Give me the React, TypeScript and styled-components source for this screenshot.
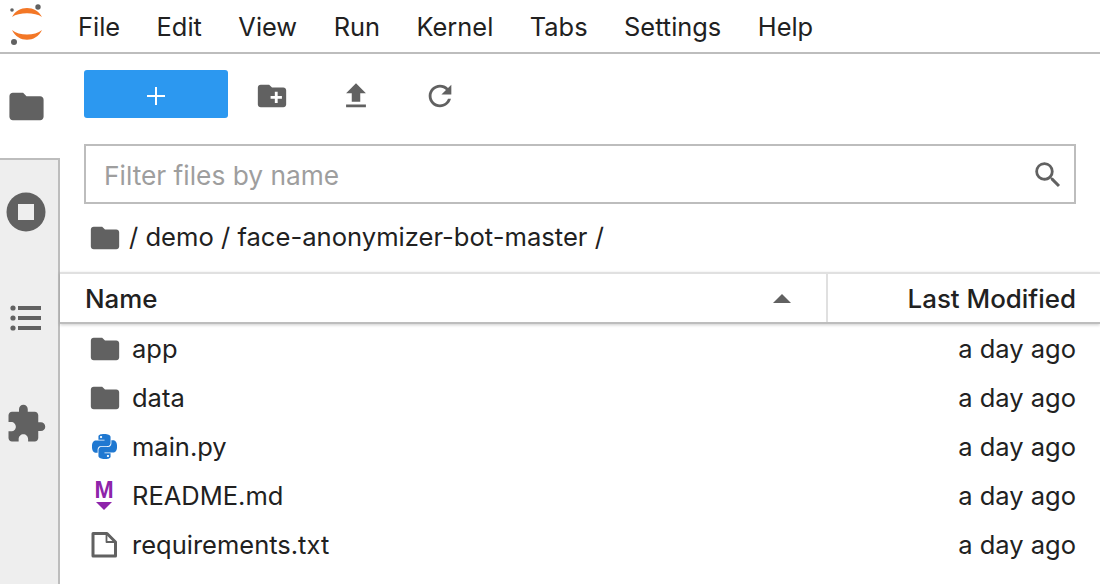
import { FC } from "react";
import styled, { createGlobalStyle } from "styled-components";
import { MdCreateNewFolder, MdExtension, MdFileUpload, MdFolder, MdRefresh, MdSearch } from "react-icons/md";
import { SiPython } from "react-icons/si";

const GlobalStyle = createGlobalStyle`
  html, body {
    margin: 0;
    height: 100%;
    overflow: hidden;
    background: #fff;
    font-family: Inter, "Liberation Sans", Arial, sans-serif;
    color: #212121;
  }
  #root { height: 100%; }
`

const Page = styled.div`
  width: 1100px;
  height: 584px;
  display: flex;
  flex-direction: column;
`
const MenuBar = styled.div`
  height: 52px;
  display: flex;
  align-items: center;
  border-bottom: 2px solid #bdbdbd;
  flex-shrink: 0;
`
const LogoBox = styled.div`
  width: 78px;
  height: 52px;
  display: flex;
`
const MenuList = styled.div`
  display: flex;
  gap: 36.5px;
  font-size: 25.4px;
  color: #212121;
`
const Body = styled.div`
  flex: 1;
  display: flex;
  min-height: 0;
`
const Sidebar = styled.div`
  width: 58px;
  flex-shrink: 0;
  background: #eeeeee;
  border-right: 2px solid #bdbdbd;
  display: flex;
  flex-direction: column;
`
const Tab = styled.div<{ $active?: boolean }>`
  height: 104px;
  flex-shrink: 0;
  box-sizing: content-box;
  display: flex;
  align-items: center;
  justify-content: center;
  color: #616161;
  background: ${p => (p.$active ? "#fff" : "transparent")};
  margin-right: ${p => (p.$active ? "-2px" : "0")};
  padding-right: ${p => (p.$active ? "8px" : "6px")};
  border-bottom: 2px solid ${p => (p.$active ? "#bdbdbd" : "transparent")};
`
const Main = styled.div`
  flex: 1;
  min-width: 0;
  display: flex;
  flex-direction: column;
`
const Toolbar = styled.div`
  display: flex;
  align-items: center;
  margin: 16px 0 26px 24px;
  height: 48px;
`
const NewButton = styled.div`
  width: 144px;
  height: 48px;
  border-radius: 3px;
  background: #2c98f0;
  display: flex;
  align-items: center;
  justify-content: center;
  margin-right: 2px;
  padding-top: 4px;
  box-sizing: border-box;
`
const ToolIcon = styled.div`
  width: 84px;
  display: flex;
  align-items: center;
  justify-content: center;
  color: #616161;
  padding-top: 4px;
`
const Filter = styled.div`
  margin: 0 24px;
  height: 60px;
  box-sizing: border-box;
  border: 2px solid #bdbdbd;
  display: flex;
  align-items: center;
  justify-content: space-between;
  padding: 2px 9px 0 18px;
  font-size: 26.3px;
  color: #9e9e9e;
`
const Crumbs = styled.div`
  height: 68px;
  display: flex;
  align-items: center;
  padding-left: 28px;
  font-size: 25.6px;
  gap: 7px;
`
const CrumbPath = styled.span`
  padding-bottom: 3px;
`
const Header = styled.div`
  height: 47px;
  padding-top: 1px;
  display: flex;
  border-top: 2px solid #e0e0e0;
  border-bottom: 2px solid #bdbdbd;
  box-shadow: 0 1px 3px rgba(0, 0, 0, 0.2);
  font-size: 25.9px;
  font-weight: 500;
`
const NameHead = styled.div`
  flex: 1;
  display: flex;
  align-items: center;
  justify-content: space-between;
  padding: 0 35px 0 25px;
`
const DateHead = styled.div`
  width: 274px;
  margin-top: -1px;
  box-sizing: border-box;
  border-left: 2px solid #e0e0e0;
  display: flex;
  align-items: center;
  justify-content: flex-end;
  padding: 1px 24px 0 0;
`
const SortCaret = styled.div`
  width: 0;
  height: 0;
  border-left: 9px solid transparent;
  border-right: 9px solid transparent;
  border-bottom: 9px solid #616161;
`
const Row = styled.div`
  height: 49px;
  display: flex;
  align-items: center;
  font-size: 25.5px;
  padding: 0 24px 0 28px;
`
const RowIcon = styled.div`
  width: 44px;
  display: flex;
  align-items: center;
  color: #616161;
`
const RowName = styled.div`
  flex: 1;
`

const JupyterLogo = () => (
  <svg width="46" height="46" viewBox="0 0 46 46" style={{ display: "block", margin: "1px 0 0 4px" }}>
    <path d="M8 16 C14 4 32 4 38 16 C31 11 15 11 8 16Z" fill="#f37726" />
    <path d="M8 29 C14 42 32 42 38 29 C31 35 15 35 8 29Z" fill="#f37726" />
    <circle cx="34" cy="6" r="2.7" fill="#616161" />
    <circle cx="8" cy="9" r="1.8" fill="#616161" />
    <circle cx="10" cy="41" r="3" fill="#616161" />
  </svg>
)

const StopIcon = () => (
  <svg width="40" height="40" viewBox="0 0 40 40">
    <circle cx="20" cy="20" r="19.5" fill="#616161" />
    <rect x="12" y="12" width="16" height="16" fill="#eeeeee" />
  </svg>
)

const ListIcon = () => (
  <svg width="34" height="28" viewBox="0 0 34 28">
    <g fill="#616161">
      <circle cx="4" cy="4" r="2.6" />
      <circle cx="4" cy="14" r="2.6" />
      <circle cx="4" cy="24" r="2.6" />
      <rect x="9" y="2" width="23" height="4" />
      <rect x="9" y="12" width="23" height="4" />
      <rect x="9" y="22" width="23" height="4" />
    </g>
  </svg>
)

const PlusIcon = () => (
  <svg width="20" height="20" viewBox="0 0 20 20">
    <path d="M10 1v18M1 10h18" stroke="#fff" strokeWidth="2" />
  </svg>
)

const MarkdownIcon = () => (
  <svg width="32" height="42" viewBox="0 0 32 42">
    <text x="16" y="23" textAnchor="middle" fontFamily="Liberation Sans" fontWeight="700" fontSize="23" fill="#8e24aa">M</text>
    <polygon points="8,27 24,27 16,35" fill="#8e24aa" />
  </svg>
)

const FileIcon = () => (
  <svg width="30" height="30" viewBox="0 0 30 30" fill="none" stroke="#616161" strokeWidth="3" strokeLinejoin="round">
    <path d="M5 3.5H19L27.5 12V26H5Z" />
    <path d="M18.5 3.5V12H27.5" strokeWidth="1.8" />
  </svg>
)

const files: { name: string; icon: JSX.Element }[] = [
  { name: "app", icon: <MdFolder size={34} /> },
  { name: "data", icon: <MdFolder size={34} /> },
  { name: "main.py", icon: <SiPython size={25} color="#1f78d1" style={{ marginLeft: 4 }} /> },
  { name: "README.md", icon: <MarkdownIcon /> },
  { name: "requirements.txt", icon: <FileIcon /> },
]

const menus = ["File", "Edit", "View", "Run", "Kernel", "Tabs", "Settings", "Help"]

const App: FC = () => {
  return (
    <Page>
      <GlobalStyle />
      <MenuBar>
        <LogoBox>
          <JupyterLogo />
        </LogoBox>
        <MenuList>
          {menus.map(m => (
            <span key={m}>{m}</span>
          ))}
        </MenuList>
      </MenuBar>
      <Body>
        <Sidebar>
          <Tab $active>
            <MdFolder size={41} />
          </Tab>
          <Tab>
            <StopIcon />
          </Tab>
          <Tab>
            <ListIcon />
          </Tab>
          <Tab>
            <MdExtension size={42} />
          </Tab>
        </Sidebar>
        <Main>
          <Toolbar>
            <NewButton>
              <PlusIcon />
            </NewButton>
            <ToolIcon>
              <MdCreateNewFolder size={34} />
            </ToolIcon>
            <ToolIcon>
              <MdFileUpload size={34} />
            </ToolIcon>
            <ToolIcon>
              <MdRefresh size={34} />
            </ToolIcon>
          </Toolbar>
          <Filter>
            <span>Filter files by name</span>
            <MdSearch size={34} color="#616161" />
          </Filter>
          <Crumbs>
            <MdFolder size={34} color="#616161" />
            <CrumbPath>/ demo / face-anonymizer-bot-master /</CrumbPath>
          </Crumbs>
          <Header>
            <NameHead>
              <span>Name</span>
              <SortCaret />
            </NameHead>
            <DateHead>Last Modified</DateHead>
          </Header>
          <div>
            {files.map(f => (
              <Row key={f.name}>
                <RowIcon>{f.icon}</RowIcon>
                <RowName>{f.name}</RowName>
                <span>a day ago</span>
              </Row>
            ))}
          </div>
        </Main>
      </Body>
    </Page>
  )
}

export default App
